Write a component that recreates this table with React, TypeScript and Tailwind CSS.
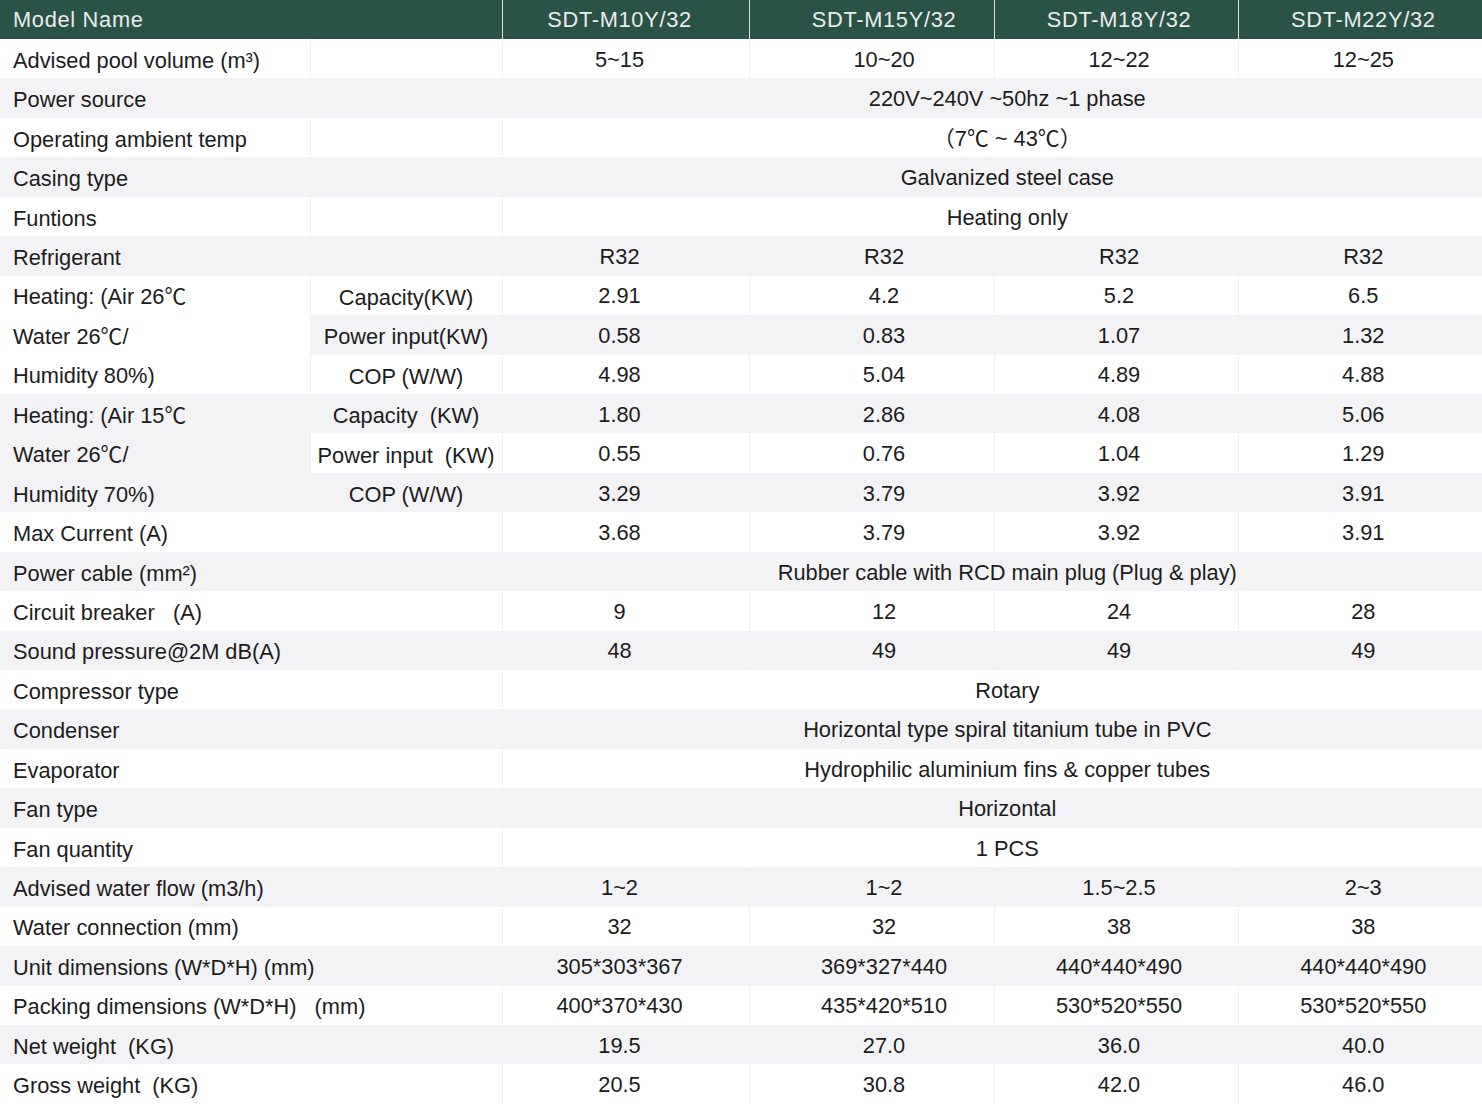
import React from "react";

type Row = {
  label: string;
  sub?: string;
  values?: string[];
  span?: string;
  labelBg?: "white" | "gray";
  merged?: boolean;
};

const models = ["SDT-M10Y/32", "SDT-M15Y/32", "SDT-M18Y/32", "SDT-M22Y/32"];

const rows: Row[] = [
  { label: "Advised pool volume (m³)", values: ["5~15", "10~20", "12~22", "12~25"] },
  { label: "Power source", span: "220V~240V ~50hz ~1 phase" },
  { label: "Operating ambient temp", span: "（7℃ ~ 43℃）" },
  { label: "Casing type", span: "Galvanized steel case" },
  { label: "Funtions", span: "Heating only" },
  { label: "Refrigerant", values: ["R32", "R32", "R32", "R32"] },
  { label: "Heating: (Air 26℃", sub: "Capacity(KW)", values: ["2.91", "4.2", "5.2", "6.5"], labelBg: "white" },
  { label: "Water 26℃/", sub: "Power input(KW)", values: ["0.58", "0.83", "1.07", "1.32"], labelBg: "white" },
  { label: "Humidity 80%)", sub: "COP (W/W)", values: ["4.98", "5.04", "4.89", "4.88"], labelBg: "white" },
  { label: "Heating: (Air 15℃", sub: "Capacity  (KW)", values: ["1.80", "2.86", "4.08", "5.06"], labelBg: "gray" },
  { label: "Water 26℃/", sub: "Power input  (KW)", values: ["0.55", "0.76", "1.04", "1.29"], labelBg: "gray" },
  { label: "Humidity 70%)", sub: "COP (W/W)", values: ["3.29", "3.79", "3.92", "3.91"], labelBg: "gray" },
  { label: "Max Current (A)", merged: true, values: ["3.68", "3.79", "3.92", "3.91"] },
  { label: "Power cable (mm²)", merged: true, span: "Rubber cable with RCD main plug (Plug & play)" },
  { label: "Circuit breaker   (A)", merged: true, values: ["9", "12", "24", "28"] },
  { label: "Sound pressure@2M dB(A)", merged: true, values: ["48", "49", "49", "49"] },
  { label: "Compressor type", merged: true, span: "Rotary" },
  { label: "Condenser", merged: true, span: "Horizontal type spiral titanium tube in PVC" },
  { label: "Evaporator", merged: true, span: "Hydrophilic aluminium fins & copper tubes" },
  { label: "Fan type", merged: true, span: "Horizontal" },
  { label: "Fan quantity", merged: true, span: "1 PCS" },
  { label: "Advised water flow (m3/h)", merged: true, values: ["1~2", "1~2", "1.5~2.5", "2~3"] },
  { label: "Water connection (mm)", merged: true, values: ["32", "32", "38", "38"] },
  { label: "Unit dimensions (W*D*H) (mm)", merged: true, values: ["305*303*367", "369*327*440", "440*440*490", "440*440*490"] },
  { label: "Packing dimensions (W*D*H)   (mm)", merged: true, values: ["400*370*430", "435*420*510", "530*520*550", "530*520*550"] },
  { label: "Net weight  (KG)", merged: true, values: ["19.5", "27.0", "36.0", "40.0"] },
  { label: "Gross weight  (KG)", merged: true, values: ["20.5", "30.8", "42.0", "46.0"] },
];

const valueOffset = ["pr-[12px]", "pl-[25px]", "pl-[6px]", "pl-[6px]"];

export default function App() {
  return (
    <div className="w-[1482px] min-h-[1118px] bg-white text-[#1c1c1c] font-['Liberation_Sans','Noto_Sans_CJK_SC',sans-serif] text-[21.8px]">
      <table className="w-full table-fixed border-collapse">
        <colgroup>
          <col className="w-[310px]" />
          <col className="w-[192px]" />
          <col className="w-[247px]" />
          <col className="w-[245px]" />
          <col className="w-[244px]" />
          <col className="w-[244px]" />
        </colgroup>
        <thead>
          <tr className="h-[39px] bg-[#2a5247] text-[#ececec] tracking-[0.7px]">
            <th colSpan={2} className="p-0 pl-[13px] pt-[1px] text-left font-normal border-r border-[#d8e0dc]">
              Model Name
            </th>
            {models.map((m, i) => (
              <th
                key={m}
                className={`p-0 pt-[1px] font-normal text-center ${i < 3 ? "border-r border-[#d8e0dc]" : ""} ${valueOffset[i]}`}
              >
                {m}
              </th>
            ))}
          </tr>
        </thead>
        <tbody>
          {rows.map((r, idx) => {
            const gray = idx % 2 === 1;
            const rowBg = gray ? "bg-[#f3f3f5]" : "bg-white";
            const labelBg = r.labelBg ? (r.labelBg === "gray" ? "bg-[#f3f3f5]" : "bg-white") : rowBg;
            return (
              <tr key={idx} className="h-[39.45px] leading-none">
                <td
                  colSpan={r.merged ? 2 : 1}
                  className={`p-0 pl-[13px] pt-[4px] whitespace-pre border-r border-[#f1f1f3] ${labelBg}`}
                >
                  {r.label}
                </td>
                {!r.merged && (
                  <td className={`p-0 pt-[5px] text-center whitespace-pre border-r border-[#f1f1f3] ${rowBg}`}>
                    {r.sub ?? ""}
                  </td>
                )}
                {r.span ? (
                  <td colSpan={4} className={`p-0 pt-[2px] pl-[30px] text-center ${rowBg}`}>
                    {r.span}
                  </td>
                ) : (
                  r.values!.map((v, i) => (
                    <td
                      key={i}
                      className={`p-0 pt-[2px] text-center ${valueOffset[i]} ${i < 3 ? "border-r border-[#f1f1f3]" : ""} ${rowBg}`}
                    >
                      {v}
                    </td>
                  ))
                )}
              </tr>
            );
          })}
        </tbody>
      </table>
    </div>
  );
}
